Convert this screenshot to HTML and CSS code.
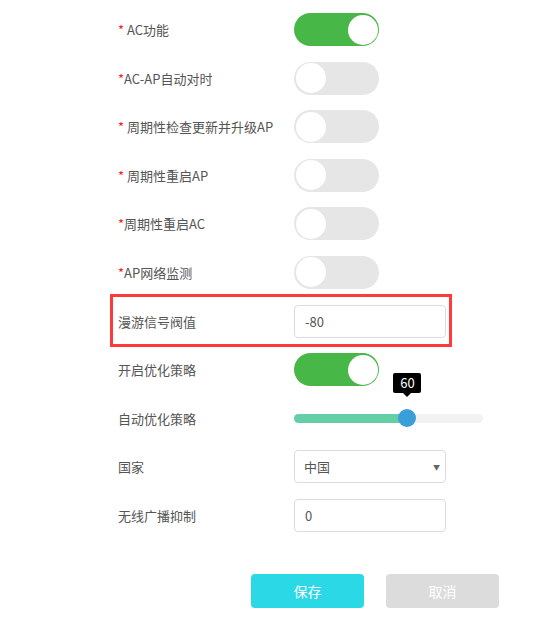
FILE: index.html
```html
<!DOCTYPE html>
<html lang="zh-CN">
  <head>
    <meta charset="UTF-8" />
    <meta name="viewport" content="width=device-width, initial-scale=1.0" />
    <title>AC设置</title>
    <link rel="stylesheet" href="styles.css">
  </head>
  <body>
    <form class="settings">
      <div class="row">
        <label class="label"><span class="req">*</span> AC功能</label>
        <span class="switch on"><span class="knob"></span></span>
      </div>
      <div class="row">
        <label class="label"><span class="req">*</span>AC-AP自动对时</label>
        <span class="switch"><span class="knob"></span></span>
      </div>
      <div class="row">
        <label class="label"><span class="req">*</span> 周期性检查更新并升级AP</label>
        <span class="switch"><span class="knob"></span></span>
      </div>
      <div class="row">
        <label class="label"><span class="req">*</span> 周期性重启AP</label>
        <span class="switch"><span class="knob"></span></span>
      </div>
      <div class="row">
        <label class="label"><span class="req">*</span>周期性重启AC</label>
        <span class="switch"><span class="knob"></span></span>
      </div>
      <div class="row">
        <label class="label"><span class="req">*</span>AP网络监测</label>
        <span class="switch"><span class="knob"></span></span>
      </div>
      <div class="row marked">
        <label class="label">漫游信号阀值</label>
        <input class="field" type="text" value="-80" />
      </div>
      <div class="row">
        <label class="label">开启优化策略</label>
        <span class="switch on"><span class="knob"></span></span>
      </div>
      <div class="row">
        <label class="label">自动优化策略</label>
        <div class="slider">
          <div class="fill" style="width: 60%">
            <span class="thumb"><span class="tip">60</span></span>
          </div>
        </div>
      </div>
      <div class="row">
        <label class="label">国家</label>
        <div class="field select">
          <span>中国</span>
          <span class="caret">▼</span>
        </div>
      </div>
      <div class="row">
        <label class="label">无线广播抑制</label>
        <input class="field" type="text" value="0" />
      </div>
      <div class="actions">
        <button type="button" class="btn save">保存</button>
        <button type="button" class="btn cancel">取消</button>
      </div>
    </form>
  </body>
</html>
```

FILE: styles.css
```css
* {
  margin: 0;
  padding: 0;
  box-sizing: border-box;
  font-family: "Noto Sans CJK SC", "Noto Sans", sans-serif;
}
body {
  background-color: #fff;
  color: #555;
  font-size: 13px;
}
.settings {
  display: flex;
  flex-direction: column;
  gap: 15.6px;
  padding: 13px 0 0 118px;
}
.row {
  display: flex;
  align-items: center;
  height: 33px;
  position: relative;
}
.label {
  width: 176px;
  font-size: 13px;
  color: #555;
  white-space: nowrap;
}
.req {
  color: #f31c1c;
}
.marked::before {
  content: "";
  box-sizing: border-box;
  position: absolute;
  left: -8px;
  top: -11px;
  width: 342px;
  height: 53px;
  border: 3px solid #ff3a3a;
}
.switch {
  position: relative;
  display: block;
  width: 85px;
  height: 33px;
  border-radius: 17px;
  background-color: #e6e6e6;
}
.switch .knob {
  position: absolute;
  top: 1.5px;
  left: 1.5px;
  width: 30px;
  height: 30px;
  border-radius: 50%;
  background-color: #fff;
}
.switch.on {
  background-color: #47b748;
}
.switch.on .knob {
  left: auto;
  right: 1.5px;
}
.field {
  width: 152px;
  height: 33px;
  padding: 0 10px;
  border: 1px solid #dcdcdc;
  border-radius: 4px;
  outline: none;
  font-size: 13px;
  color: #555;
  background-color: #fff;
}
.select {
  display: flex;
  align-items: center;
  justify-content: space-between;
  padding: 0 5px 0 9px;
}
.caret {
  font-size: 7px;
  color: #666;
}
.slider {
  width: 189px;
  height: 9px;
  border-radius: 5px;
  background-color: #f2f2f2;
}
.fill {
  position: relative;
  height: 100%;
  border-radius: 5px;
  background-color: #64cea6;
}
.thumb {
  position: absolute;
  right: -9px;
  top: -4.5px;
  width: 18px;
  height: 18px;
  border-radius: 50%;
  background-color: #3a9fd9;
}
.tip {
  position: absolute;
  left: 50%;
  bottom: 34px;
  transform: translateX(-50%);
  width: 28px;
  height: 20px;
  border-radius: 2px;
  background-color: #000;
  color: #fff;
  font-size: 13px;
  line-height: 20px;
  text-align: center;
}
.tip::after {
  content: "";
  box-sizing: border-box;
  position: absolute;
  left: 50%;
  top: 20px;
  margin-left: -4px;
  border: 4px solid transparent;
  border-top-color: #000;
}
.actions {
  display: flex;
  gap: 22px;
  margin-top: 26.4px;
  padding-left: 133px;
}
.btn {
  width: 113px;
  height: 34px;
  border: none;
  border-radius: 4px;
  color: #fff;
  font-size: 14px;
}
.save {
  background-color: #2ad8e6;
}
.cancel {
  background-color: #dcdcdc;
}
```
